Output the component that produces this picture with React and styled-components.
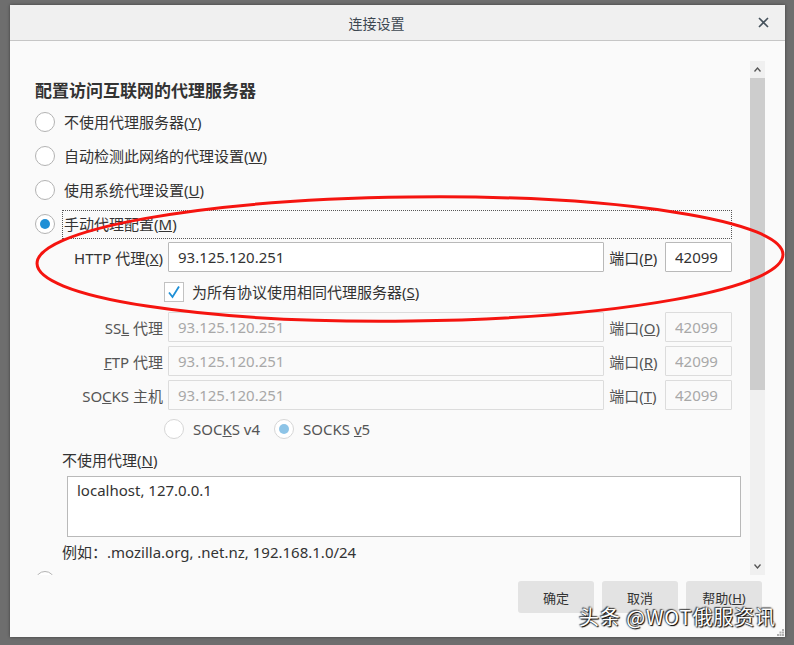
import styled, { createGlobalStyle } from 'styled-components'

const GlobalStyle = createGlobalStyle`
  html, body { margin: 0; padding: 0; }
  body {
    background: #6e6e6e;
    font-family: "Noto Sans", "Noto Sans CJK SC", sans-serif;
    color: #333;
  }
  * { box-sizing: border-box; }
`

const Page = styled.div`
  position: relative;
  width: 794px;
  height: 645px;
  padding: 5px 9px 8px 10px;
`

const Dialog = styled.div`
  width: 775px;
  height: 632px;
  display: flex;
  flex-direction: column;
  background: #fafafa;
  box-shadow: 0 0 3px rgba(0, 0, 0, 0.45);
`

const Header = styled.div`
  height: 36px;
  flex: none;
  display: grid;
  grid-template-columns: 1fr auto 1fr;
  align-items: center;
  background: #f0f0f0;
  border-bottom: 1px solid #c6c6c6;
`

const Title = styled.div`
  grid-column: 2;
  margin-right: 42px;
  font-size: 14px;
  color: #3d4750;
  font-family: "Noto Sans CJK SC", sans-serif;
`

const Close = styled.div`
  grid-column: 3;
  justify-self: end;
  margin-right: 16px;
  display: flex;
`

const Body = styled.div`
  flex: 1;
  display: flex;
  padding-top: 20px;
  min-height: 0;
`

const Viewport = styled.div`
  flex: 1;
  overflow: hidden;
  padding: 16px 9px 0 25px;
`

const Heading = styled.div`
  height: 28px;
  line-height: 28px;
  font-size: 17px;
  font-weight: 700;
  color: #333;
`

const OptionRow = styled.div`
  height: 34px;
  display: flex;
  align-items: center;
  gap: 9px;
`

const RadioCircle = styled.span`
  flex: none;
  width: 20px;
  height: 20px;
  border-radius: 50%;
  background: #fff;
  border: 1px solid ${p => (p.$disabled ? '#d6d6d6' : '#b3b3b3')};
  display: grid;
  place-items: center;
  &::after {
    content: '';
    width: 10px;
    height: 10px;
    border-radius: 50%;
    display: ${p => (p.$checked ? 'block' : 'none')};
    background: ${p => (p.$disabled ? '#8dc4e7' : '#1e8fd6')};
  }
`

const OptionLabel = styled.span`
  font-size: 15px;
  line-height: 20px;
  color: ${p => (p.$disabled ? '#555' : '#333')};
  white-space: nowrap;
`

const FocusLabel = styled(OptionLabel)`
  flex: 1;
  height: 29px;
  display: flex;
  align-items: center;
  margin: 0 9px 0 -2px;
  padding-left: 1px;
  border: 1px dotted #555;
`

const ProxyGrid = styled.div`
  margin: 1px 9px 0 27px;
  display: grid;
  grid-template-columns: 101px 1fr auto 67px;
  grid-template-rows: 30px 32px 30px 30px 30px 30px;
  column-gap: 5px;
  row-gap: 4px;
  align-items: center;
`

const FieldLabel = styled.label`
  text-align: right;
  font-size: 15px;
  white-space: nowrap;
  color: ${p => (p.$disabled ? '#555' : '#333')};
`

const PortLabel = styled(FieldLabel)`
  text-align: left;
`

const Field = styled.input`
  width: 100%;
  height: 30px;
  min-width: 0;
  padding: 0 0 0 9px;
  font: 15px "Noto Sans", "Noto Sans CJK SC", sans-serif;
  border-radius: 1px;
  outline: none;
  color: ${p => (p.$disabled ? '#a8a8a8' : '#333')};
  background: ${p => (p.$disabled ? '#fafafa' : '#fff')};
  border: 1px solid ${p => (p.$disabled ? '#dcdcdc' : '#b9b9b9')};
`

const SpanRow = styled.div`
  grid-column: 2 / 5;
  display: flex;
  align-items: center;
  margin-left: -4px;
  gap: ${p => (p.$gap ?? 8)}px;
`

const CheckBox = styled.span`
  flex: none;
  width: 20px;
  height: 20px;
  background: #fff;
  border: 1px solid #c2c2c2;
  display: grid;
  place-items: center;
`

const VersionItem = styled.span`
  display: flex;
  align-items: center;
  gap: 9px;
  margin-right: 14px;
`

const SubLabel = styled.div`
  margin: 4px 0 0 27px;
  height: 24px;
  line-height: 24px;
  font-size: 15px;
`

const NoProxy = styled.textarea`
  display: block;
  width: 674px;
  height: 61px;
  margin: 4px 0 0 32px;
  padding: 3px 9px;
  resize: none;
  outline: none;
  font: 15px/20px "Noto Sans", "Noto Sans CJK SC", sans-serif;
  color: #333;
  background: #fff;
  border: 1px solid #b9b9b9;
`

const Hint = styled.div`
  margin: 3px 0 0 27px;
  height: 24px;
  line-height: 24px;
  font-size: 15px;
  color: #333;
`

const Scrollbar = styled.div`
  width: 15px;
  margin-right: 20px;
  background: #f0f0f0;
  display: flex;
  flex-direction: column;
`

const ScrollArrow = styled.div`
  height: 17px;
  display: grid;
  place-items: center;
`

const Thumb = styled.div`
  height: 312px;
  background: #cdcdcd;
`

const Track = styled.div`
  flex: 1;
`

const Footer = styled.div`
  position: relative;
  flex: none;
  display: flex;
  justify-content: flex-end;
  gap: 8px;
  padding: 6px 23px 24px 0;
`

const Button = styled.button`
  width: 76px;
  height: 32px;
  padding: 0;
  border: none;
  border-radius: 3px;
  background: #e3e3e3;
  color: #333;
  font: 13px "Noto Sans", "Noto Sans CJK SC", sans-serif;
`

const Grip = styled.svg`
  position: absolute;
  right: 1px;
  bottom: 1px;
`

const Annotation = styled.svg`
  position: absolute;
  left: 0;
  top: 0;
  pointer-events: none;
`

const Watermark = styled.div`
  position: absolute;
  left: 579px;
  top: 604px;
  font-family: "Noto Sans CJK SC", sans-serif;
  font-size: 20px;
  line-height: 26px;
  letter-spacing: 0.9px;
  color: #fff;
  white-space: nowrap;
  text-shadow: 0 0 2px #000, 1px 1px 1px #000, -1px -1px 1px rgba(0, 0, 0, 0.6);
`

function Radio({ checked, disabled }) {
  return <RadioCircle $checked={checked} $disabled={disabled} />
}

function Check() {
  return (
    <CheckBox>
      <svg width="14" height="14" viewBox="0 0 14 14">
        <polyline points="2,7.5 5.5,12 12,1.5" fill="none" stroke="#1e8fd6" strokeWidth="1.8" />
      </svg>
    </CheckBox>
  )
}

function Chevron({ up }) {
  return (
    <svg width="7" height="5" viewBox="0 0 7 5">
      <polyline
        points={up ? '0.5,4.5 3.5,1 6.5,4.5' : '0.5,0.5 3.5,4 6.5,0.5'}
        fill="none"
        stroke="#555"
        strokeWidth="1.3"
      />
    </svg>
  )
}

function ProxyRow({ label, accel, disabled }) {
  return (
    <>
      <FieldLabel $disabled={disabled}>{label}</FieldLabel>
      <Field $disabled={disabled} readOnly value="93.125.120.251" />
      <PortLabel $disabled={disabled}>
        端口(<u>{accel}</u>)
      </PortLabel>
      <Field $disabled={disabled} readOnly value="42099" />
    </>
  )
}

const proxies = [
  { label: <>SS<u>L</u> 代理</>, accel: 'O' },
  { label: <><u>F</u>TP 代理</>, accel: 'R' },
  { label: <>SO<u>C</u>KS 主机</>, accel: 'T' },
]

export default function App() {
  return (
    <Page>
      <GlobalStyle />
      <Dialog>
        <Header>
          <Title>连接设置</Title>
          <Close>
            <svg width="11" height="11" viewBox="0 0 11 11">
              <path d="M1 1 L10 10 M10 1 L1 10" stroke="#46525c" strokeWidth="1.6" />
            </svg>
          </Close>
        </Header>
        <Body>
          <Viewport>
            <Heading>配置访问互联网的代理服务器</Heading>
            <OptionRow>
              <Radio />
              <OptionLabel>不使用代理服务器(<u>Y</u>)</OptionLabel>
            </OptionRow>
            <OptionRow>
              <Radio />
              <OptionLabel>自动检测此网络的代理设置(<u>W</u>)</OptionLabel>
            </OptionRow>
            <OptionRow>
              <Radio />
              <OptionLabel>使用系统代理设置(<u>U</u>)</OptionLabel>
            </OptionRow>
            <OptionRow>
              <Radio checked />
              <FocusLabel>手动代理配置(<u>M</u>)</FocusLabel>
            </OptionRow>

            <ProxyGrid>
              <ProxyRow label={<>HTTP 代理(<u>X</u>)</>} accel="P" />

              <SpanRow>
                <Check />
                <OptionLabel>为所有协议使用相同代理服务器(<u>S</u>)</OptionLabel>
              </SpanRow>

              {proxies.map(p => (
                <ProxyRow key={p.accel} {...p} disabled />
              ))}

              <SpanRow $gap={0}>
                <VersionItem>
                  <Radio disabled />
                  <OptionLabel $disabled>SOC<u>K</u>S v4</OptionLabel>
                </VersionItem>
                <VersionItem>
                  <Radio checked disabled />
                  <OptionLabel $disabled>SOCKS <u>v</u>5</OptionLabel>
                </VersionItem>
              </SpanRow>
            </ProxyGrid>

            <SubLabel>不使用代理(<u>N</u>)</SubLabel>
            <NoProxy readOnly value="localhost, 127.0.0.1" />
            <Hint>例如：.mozilla.org, .net.nz, 192.168.1.0/24</Hint>
            <OptionRow>
              <Radio />
            </OptionRow>
          </Viewport>
          <Scrollbar>
            <ScrollArrow>
              <Chevron up />
            </ScrollArrow>
            <Thumb />
            <Track />
            <ScrollArrow>
              <Chevron />
            </ScrollArrow>
          </Scrollbar>
        </Body>
        <Footer>
          <Button>确定</Button>
          <Button>取消</Button>
          <Button>帮助(<u>H</u>)</Button>
          <Grip width="7" height="7" viewBox="0 0 7 7">
            <g fill="#b0b0b0">
              <rect x="5" y="0" width="2" height="2" />
              <rect x="2.5" y="2.5" width="2" height="2" />
              <rect x="5" y="2.5" width="2" height="2" />
              <rect x="0" y="5" width="2" height="2" />
              <rect x="2.5" y="5" width="2" height="2" />
              <rect x="5" y="5" width="2" height="2" />
            </g>
          </Grip>
        </Footer>
      </Dialog>

      <Annotation width="794" height="645" viewBox="0 0 794 645">
        <ellipse
          cx="410"
          cy="259"
          rx="373"
          ry="62"
          transform="rotate(-0.7 410 259)"
          fill="none"
          stroke="#f5140f"
          strokeWidth="3"
        />
      </Annotation>
      <Watermark>头条 @WOT俄服资讯</Watermark>
    </Page>
  )
}
